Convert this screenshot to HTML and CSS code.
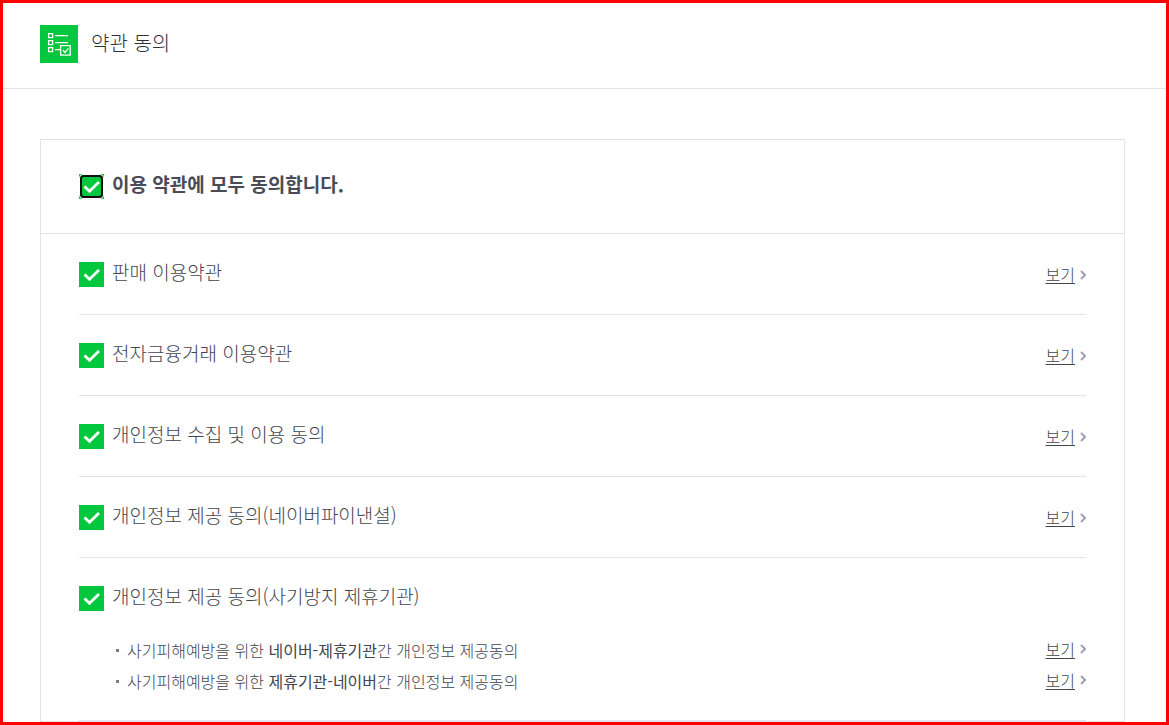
FILE: index.html
```html
<!DOCTYPE html>
<html lang="ko">
<head>
<meta charset="utf-8">
<title>약관 동의</title>
<link rel="stylesheet" href="styles.css">
</head>
<body>
<main class="frame">
  <header class="header">
    <svg class="logo" viewBox="0 0 38 38" fill="none" stroke="#fff" aria-hidden="true">
      <rect width="38" height="38" fill="#03c73c" stroke="none"/>
      <g stroke-width="1.3">
        <path d="M8.6 8.6h4v4h-4zM8.6 15.6h4v4h-4zM8.6 22.6h4v4h-4z"/>
        <path d="M15 10.6h13M15 17.6h13M15 24.6h5"/>
        <path d="M20.6 20.6h9.6v9.6h-9.6z" fill="#03c73c"/>
        <path d="M22.8 25l2.2 2.5 3.4-4.2"/>
      </g>
    </svg>
    <h1 class="title">약관 동의</h1>
  </header>
  <form class="card">
    <div class="all">
      <input class="check check-active" type="checkbox" id="all" checked>
      <label class="label label-all" for="all">이용 약관에 모두 동의합니다.</label>
    </div>
    <ul class="terms">
      <li class="term">
        <div class="row">
          <input class="check" type="checkbox" id="t1" checked>
          <label class="label" for="t1">판매 이용약관</label>
          <a class="view" href="#"><span class="view-text">보기</span><svg class="arrow" viewBox="0 0 6 10" aria-hidden="true"><path d="M1 1l4 4-4 4"/></svg></a>
        </div>
      </li>
      <li class="term">
        <div class="row">
          <input class="check" type="checkbox" id="t2" checked>
          <label class="label" for="t2">전자금융거래 이용약관</label>
          <a class="view" href="#"><span class="view-text">보기</span><svg class="arrow" viewBox="0 0 6 10" aria-hidden="true"><path d="M1 1l4 4-4 4"/></svg></a>
        </div>
      </li>
      <li class="term">
        <div class="row">
          <input class="check" type="checkbox" id="t3" checked>
          <label class="label" for="t3">개인정보 수집 및 이용 동의</label>
          <a class="view" href="#"><span class="view-text">보기</span><svg class="arrow" viewBox="0 0 6 10" aria-hidden="true"><path d="M1 1l4 4-4 4"/></svg></a>
        </div>
      </li>
      <li class="term">
        <div class="row">
          <input class="check" type="checkbox" id="t4" checked>
          <label class="label" for="t4">개인정보 제공 동의(네이버파이낸셜)</label>
          <a class="view" href="#"><span class="view-text">보기</span><svg class="arrow" viewBox="0 0 6 10" aria-hidden="true"><path d="M1 1l4 4-4 4"/></svg></a>
        </div>
      </li>
      <li class="term term-group">
        <div class="row">
          <input class="check" type="checkbox" id="t5" checked>
          <label class="label" for="t5">개인정보 제공 동의(사기방지 제휴기관)</label>
        </div>
        <ul class="details">
          <li class="detail">
            <span>사기피해예방을 위한 <b>네이버-제휴기관</b>간 개인정보 제공동의</span>
            <a class="view" href="#"><span class="view-text">보기</span><svg class="arrow" viewBox="0 0 6 10" aria-hidden="true"><path d="M1 1l4 4-4 4"/></svg></a>
          </li>
          <li class="detail">
            <span>사기피해예방을 위한 <b>제휴기관-네이버</b>간 개인정보 제공동의</span>
            <a class="view" href="#"><span class="view-text">보기</span><svg class="arrow" viewBox="0 0 6 10" aria-hidden="true"><path d="M1 1l4 4-4 4"/></svg></a>
          </li>
        </ul>
      </li>
    </ul>
  </form>
</main>
</body>
</html>
```
FILE: styles.css
```css
* {
  box-sizing: border-box;
}

body {
  margin: 0;
  background: #fff;
  color: #42454f;
  font-family: "Noto Sans CJK KR", sans-serif;
  font-weight: 300;
}

.frame {
  height: 100vh;
  border: 3px solid #f00;
  overflow: hidden;
}

.header {
  display: flex;
  align-items: center;
  gap: 13px;
  padding: 22px 37px 25px;
  border-bottom: 1px solid #e1e4ec;
}

.logo {
  flex: none;
  width: 38px;
  height: 38px;
}

.title {
  margin: 0;
  padding-bottom: 2px;
  color: #303038;
  font-size: 20px;
  font-weight: 300;
  line-height: 36px;
}

.card {
  margin: 50px 41px 0 37px;
  border: 1px solid #e1e4ec;
}

.all {
  display: flex;
  padding: 34px 38px;
  border-bottom: 1px solid #e1e4ec;
}

.check {
  position: relative;
  flex: none;
  appearance: none;
  width: 25px;
  height: 25px;
  margin: 0;
  background: #03c73c url("data:image/svg+xml,%3Csvg xmlns='http://www.w3.org/2000/svg' viewBox='0 0 25 25'%3E%3Cpath d='M5.5 12.5l5 4.8L20 8' fill='none' stroke='%23fff' stroke-width='2.8'/%3E%3C/svg%3E");
}

.check-active::before,
.check-active::after {
  content: "";
  position: absolute;
  inset: 0;
  border: 1px solid #fff;
  border-radius: 4px;
}

.check-active::after {
  inset: 1px;
  border: 2px solid #101010;
}

.label {
  margin-left: 8px;
  font-size: 19px;
  line-height: 20px;
}

.label-all {
  color: #494c56;
  font-weight: 700;
}

.terms,
.details {
  margin: 0;
  padding: 0;
  list-style: none;
}

.terms {
  padding: 0 38px;
}

.term {
  padding: 28px 0 27px;
  border-bottom: 1px solid #e1e4ec;
}

.term-group {
  padding-bottom: 23px;
}

.row {
  display: flex;
}

.view {
  display: flex;
  align-items: center;
  gap: 5px;
  margin-left: auto;
  color: inherit;
  font-size: 16px;
  line-height: 25px;
  text-decoration: none;
}

.view-text {
  text-decoration: underline;
  text-underline-offset: 2px;
}

.arrow {
  width: 6px;
  height: 10px;
  fill: none;
  stroke: #9da2b3;
  stroke-width: 2;
}

.details {
  margin-top: 24px;
  padding-left: 37px;
}

.detail {
  display: flex;
  align-items: center;
  font-size: 16px;
  line-height: 31px;
}

.detail .view {
  padding-bottom: 3px;
}

.detail::before {
  content: "";
  width: 3px;
  height: 3px;
  margin-right: 8px;
  background: #7b7e8c;
}
```
